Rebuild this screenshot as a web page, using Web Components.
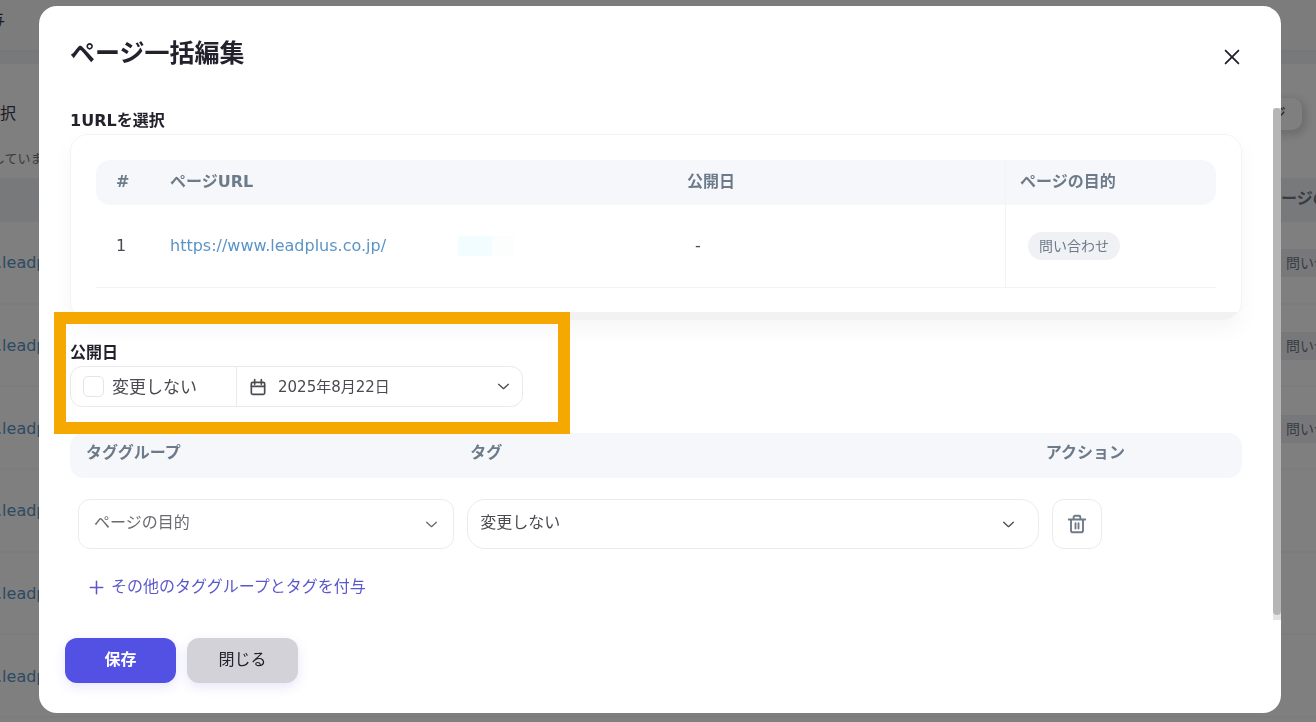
<!DOCTYPE html>
<html lang="ja">
<head>
<meta charset="utf-8">
<title>ページ一括編集</title>
<style>
  html, body {
    height: 100%;
    margin: 0;
  }
  body {
    font-family: "DejaVu Sans", "Noto Sans CJK JP", sans-serif;
    font-size: 16px;
    line-height: 24px;
    color: #4a4a52;
    overflow: hidden;
    --line: #f3f3f5;
    --head: #f5f7fb;
    --muted: #6c7a89;
    --ink: #23222c;
    --link: #5a94c8;
    --accent: #5350e4;
  }
</style>
</head>
<body>
<page-backdrop></page-backdrop>
<modal-dialog heading="ページ一括編集">
  <url-card label="1URLを選択"></url-card>
  <publish-date></publish-date>
  <tag-editor></tag-editor>
  <action-button slot="footer" kind="primary">保存</action-button>
  <action-button slot="footer">閉じる</action-button>
</modal-dialog>

<script>
//Small helper, every element fills its shadow root the same way
class BaseElement extends HTMLElement {
  constructor() {
    super();
    this.attachShadow({mode: 'open'});
  }

  connectedCallback() {
    this.shadowRoot.innerHTML = this.render();
  }
}

//Icons share the same stroke style
class UiIcon extends BaseElement {
  render() {
    const icons = {
      close: '<path d="M5 5l14 14M19 5L5 19"/>',
      chevron: '<path d="M3 8l9 8 9-8"/>',
      plus: '<path d="M12 2v20M2 12h20"/>',
      calendar: '<rect x="2" y="5" width="20" height="18" rx="2"/><path d="M2 11h20M7 1v7M17 1v7"/>',
      trash: '<path d="M1 6h22M4 6v14.500a2.500 2.500 0 0 0 2.500 2.500h11a2.500 2.500 0 0 0 2.500-2.500V6M7.500 6V3a2 2 0 0 1 2-2h5a2 2 0 0 1 2 2v3M10 11v7M14 11v7"/>'
    };
    return `
      <style>
        :host {
          display: block;
          flex: none;
          width: 16px;
          height: 16px;
        }
        svg {
          display: block;
          width: 100%;
          height: 100%;
          overflow: visible;
          fill: none;
          stroke: currentColor;
          stroke-width: var(--stroke, 2.500);
          stroke-linecap: round;
          stroke-linejoin: round;
        }
      </style>
      <svg viewBox="0 0 24 24" aria-hidden="true">${icons[this.getAttribute('name')]}</svg>
    `;
  }
}

//The list page that lies under the dialog
class PageBackdrop extends BaseElement {
  render() {
    const row = (tag) => `
      <div class="row"><a href="#">.leadp</a>${tag ? '<span class="tag">問い合</span>' : ''}</div>`;
    return `
      <style>
        :host {
          display: flex;
          flex-direction: column;
          height: 100%;
          overflow: hidden;
          background: #fff;
          color: #3c3b46;
        }
        .bar {
          height: 40px;
          padding-bottom: 10px;
          display: flex;
          align-items: center;
          background: #f8f8fb;
          border-bottom: 2px solid #eeeef2;
        }
        .bar span {
          margin-left: -11px;
        }
        .band {
          height: 12px;
          background: #eef3f7;
        }
        .tools {
          display: flex;
          align-items: center;
          justify-content: space-between;
          height: 32px;
          padding: 34px 14px 0 0;
        }
        button {
          width: 48px;
          height: 32px;
          border: 0;
          border-radius: 10px;
          padding: 0 16px 0 0;
          font: inherit;
          color: inherit;
          background: #fff;
          text-align: right;
          box-shadow: 2px 3px 8px 2px rgba(60, 60, 90, .2);
        }
        p {
          margin: 0 0 0 -8px;
          padding: 16px 0 6px;
          font-size: 13px;
          line-height: 26px;
          color: var(--muted);
        }
        .head {
          display: flex;
          justify-content: flex-end;
          height: 32px;
          padding-top: 12px;
          background: #eff3f7;
          color: var(--muted);
          font-weight: bold;
          line-height: 18px;
        }
        .head span {
          width: 35px;
          white-space: nowrap;
        }
        .rows {
          flex: 1;
          display: grid;
          grid-auto-rows: 1fr;
          padding-bottom: 4px;
        }
        .row {
          display: flex;
          align-items: center;
          justify-content: space-between;
          padding-top: 2px;
          border-bottom: 2px solid #f8f8fa;
        }
        a {
          margin-left: -3px;
          color: var(--link);
          text-decoration: none;
        }
        .tag {
          width: 30px;
          padding-left: 5px;
          overflow: hidden;
          white-space: nowrap;
          font-size: 14px;
          line-height: 28px;
          background: #f0f1f5;
          color: var(--muted);
        }
      </style>
      <div class="bar"><span>与</span></div>
      <div class="band"></div>
      <div class="tools"><span>択</span><button type="button">ジ</button></div>
      <p>していま</p>
      <div class="head"><span>ージの</span></div>
      <div class="rows">
        ${row(true)}${row(true)}${row(true)}${row()}${row()}${row()}
      </div>
    `;
  }
}

class ModalDialog extends BaseElement {
  render() {
    return `
      <style>
        :host {
          position: fixed;
          inset: 0;
          display: flex;
          padding: 6px 35px 9px 39px;
          background: rgba(0, 0, 0, .5);
        }
        section {
          flex: 1;
          min-width: 0;
          display: flex;
          flex-direction: column;
          border-radius: 18px;
          overflow: hidden;
          background: #fff;
        }
        header {
          display: flex;
          justify-content: space-between;
          padding: 32px 38px 38px 31px;
        }
        h2 {
          margin: 0;
          font-size: 25px;
          line-height: 32px;
          color: var(--ink);
        }
        header button {
          display: flex;
          align-items: center;
          border: 0;
          padding: 6px 0 0;
          background: none;
          color: var(--ink);
        }
        header ui-icon {
          width: 22px;
          height: 22px;
          --stroke: 2;
        }
        .body {
          flex: 1;
          min-height: 0;
          display: flex;
        }
        .content {
          flex: 1;
          min-width: 0;
          padding: 0 31px;
        }
        .track {
          display: flex;
          width: 8px;
          padding-bottom: 5px;
          background: #e3e3e3;
        }
        .thumb {
          flex: 1;
          border-radius: 4px;
          background: #b5b5b5;
        }
        footer {
          display: flex;
          gap: 11px;
          padding: 18px 26px 30px;
        }
      </style>
      <section role="dialog" aria-labelledby="title">
        <header>
          <h2 id="title">${this.getAttribute('heading')}</h2>
          <button type="button" aria-label="閉じる"><ui-icon name="close"></ui-icon></button>
        </header>
        <div class="body">
          <div class="content"><slot></slot></div>
          <div class="track"><div class="thumb"></div></div>
        </div>
        <footer><slot name="footer"></slot></footer>
      </section>
    `;
  }
}

class UrlCard extends BaseElement {
  render() {
    return `
      <style>
        :host {
          display: block;
        }
        h3 {
          margin: 0;
          font-size: 16px;
          line-height: 26px;
          color: var(--ink);
        }
        .card {
          border: 1px solid var(--line);
          border-radius: 18px;
          padding-top: 25px;
          overflow: hidden;
          box-shadow: 0 10px 22px rgba(0, 0, 0, .04);
        }
        .scroll {
          padding: 0 25px 24px;
        }
        .strip {
          height: 7px;
          background: #f2f2f2;
        }
        table {
          width: 100%;
          table-layout: fixed;
          border-collapse: separate;
          border-spacing: 0;
        }
        th, td {
          padding: 0 14px;
          text-align: left;
        }
        th {
          height: 44px;
          padding-bottom: 1px;
          background: var(--head);
          color: var(--muted);
        }
        td {
          height: 82px;
          border-bottom: 1px solid var(--line);
        }
        th:first-child {
          border-radius: 14px 0 0 14px;
        }
        th:last-child {
          border-radius: 0 14px 14px 0;
        }
        th:first-child, td:first-child {
          padding-left: 20px;
        }
        th:last-child, td:last-child {
          border-left: 1px solid var(--line);
        }
        .num { width: 60px; box-sizing: border-box; }
        .date { width: 304px; }
        .goal { width: 182px; }
        .link {
          display: flex;
          align-items: center;
          gap: 72px;
        }
        a {
          color: var(--link);
          text-decoration: none;
        }
        .mask {
          width: 56px;
          height: 20px;
          background: linear-gradient(90deg, #f1fdff 60%, #fcfdfd 60%);
        }
        .value {
          margin-left: 8px;
        }
        .tag {
          display: inline-block;
          padding: 0 11px;
          border-radius: 14px;
          background: #f0f1f5;
          color: var(--muted);
          font-size: 14px;
          line-height: 28px;
        }
      </style>
      <h3>${this.getAttribute('label')}</h3>
      <div class="card">
        <div class="scroll">
          <table>
            <thead>
              <tr>
                <th class="num">#</th>
                <th>ページURL</th>
                <th class="date">公開日</th>
                <th class="goal">ページの目的</th>
              </tr>
            </thead>
            <tbody>
              <tr>
                <td>1</td>
                <td><div class="link"><a href="#">https://www.leadplus.co.jp/</a><span class="mask"></span></div></td>
                <td><span class="value">-</span></td>
                <td><span class="value tag">問い合わせ</span></td>
              </tr>
            </tbody>
          </table>
        </div>
        <div class="strip"></div>
      </div>
    `;
  }
}

class PublishDate extends BaseElement {
  render() {
    return `
      <style>
        :host {
          display: block;
          position: relative;
          padding: 20px 0 26px;
        }
        /* marker frame drawn over the neighbouring blocks */
        .marker {
          position: absolute;
          inset: -8px auto -1px -16px;
          width: 492px;
          border: 12px solid #f5a800;
          pointer-events: none;
        }
        h3 {
          margin: 0;
          font-size: 16px;
          line-height: 26px;
          color: var(--ink);
        }
        .control {
          display: inline-flex;
          vertical-align: top;
          width: 451px;
          height: 39px;
          border: 1px solid #e9e9ec;
          border-radius: 12px;
        }
        label {
          display: flex;
          align-items: center;
          gap: 8px;
          width: 153px;
          padding-left: 12px;
          font-size: 17px;
          border-right: 1px solid #e9e9ec;
        }
        input {
          appearance: none;
          width: 21px;
          height: 21px;
          margin: 0;
          border: 1px solid #e4e4ea;
          border-radius: 5px;
        }
        button {
          flex: 1;
          display: flex;
          align-items: center;
          gap: 12px;
          border: 0;
          padding: 0 12px 0 13px;
          background: none;
          color: inherit;
          font: inherit;
          font-size: 15px;
          text-align: left;
        }
        button span {
          flex: 1;
        }
        .chevron {
          width: 13px;
          height: 13px;
        }
      </style>
      <h3>公開日</h3>
      <div class="control">
        <label><input type="checkbox">変更しない</label>
        <button type="button">
          <ui-icon name="calendar"></ui-icon>
          <span>2025年8月22日</span>
          <ui-icon class="chevron" name="chevron"></ui-icon>
        </button>
      </div>
      <div class="marker"></div>
    `;
  }
}

class SelectBox extends BaseElement {
  render() {
    return `
      <style>
        :host {
          display: grid;
          align-items: center;
          height: 50px;
        }
        select, ui-icon {
          grid-area: 1 / 1;
        }
        select {
          appearance: none;
          width: 100%;
          height: 50px;
          border: 1px solid #ebebee;
          border-radius: var(--radius, 12px);
          padding: 0 40px 3px var(--start, 15px);
          background: #fff;
          color: inherit;
          font: inherit;
        }
        ui-icon {
          justify-self: end;
          width: 13px;
          height: 13px;
          margin-right: var(--end, 16px);
          pointer-events: none;
        }
      </style>
      <select aria-label="${this.getAttribute('label')}">
        <option>${this.getAttribute('value')}</option>
      </select>
      <ui-icon name="chevron"></ui-icon>
    `;
  }
}

class TagEditor extends BaseElement {
  render() {
    return `
      <style>
        :host {
          display: block;
        }
        .head {
          display: grid;
          grid-template-columns: 384fr 575fr 196fr;
          padding: 8px 0 13px 16px;
          border-radius: 14px;
          background: var(--head);
          color: var(--muted);
          font-weight: bold;
        }
        .row {
          display: grid;
          grid-template-columns: 376fr 571fr 50px 127fr;
          gap: 13px;
          padding: 21px 0 0 8px;
        }
        .group {
          color: #6a6a70;
        }
        .tag {
          --radius: 18px;
          --start: 12px;
          --end: 24px;
        }
        button {
          border: 0;
          padding: 0;
          background: none;
          font: inherit;
        }
        .delete {
          display: grid;
          place-items: center;
          height: 50px;
          border: 1px solid #ebebee;
          border-radius: 12px;
          color: var(--muted);
        }
        .delete ui-icon {
          width: 18px;
          height: 18px;
        }
        .add {
          display: flex;
          align-items: center;
          gap: 7px;
          margin: 26px 0 0 19px;
          color: #5c58cc;
        }
        .add ui-icon {
          width: 15px;
          height: 15px;
        }
      </style>
      <div class="head"><span>タググループ</span><span>タグ</span><span>アクション</span></div>
      <div class="row">
        <select-box class="group" label="タググループ" value="ページの目的"></select-box>
        <select-box class="tag" label="タグ" value="変更しない"></select-box>
        <button class="delete" type="button" aria-label="削除"><ui-icon name="trash"></ui-icon></button>
      </div>
      <button class="add" type="button"><ui-icon name="plus"></ui-icon>その他のタググループとタグを付与</button>
    `;
  }
}

class ActionButton extends BaseElement {
  render() {
    return `
      <style>
        :host {
          display: block;
        }
        button {
          min-width: 111px;
          height: 45px;
          border: 0;
          border-radius: 12px;
          padding: 0 16px 1px;
          background: #d3d2d8;
          color: var(--ink);
          font: inherit;
          box-shadow: 0 4px 12px rgba(83, 80, 228, .14);
        }
        :host([kind="primary"]) button {
          background: var(--accent);
          color: #fff;
          font-weight: bold;
        }
      </style>
      <button type="button"><slot></slot></button>
    `;
  }
}

customElements.define('ui-icon', UiIcon);
customElements.define('page-backdrop', PageBackdrop);
customElements.define('select-box', SelectBox);
customElements.define('url-card', UrlCard);
customElements.define('publish-date', PublishDate);
customElements.define('tag-editor', TagEditor);
customElements.define('action-button', ActionButton);
customElements.define('modal-dialog', ModalDialog);
</script>
</body>
</html>
